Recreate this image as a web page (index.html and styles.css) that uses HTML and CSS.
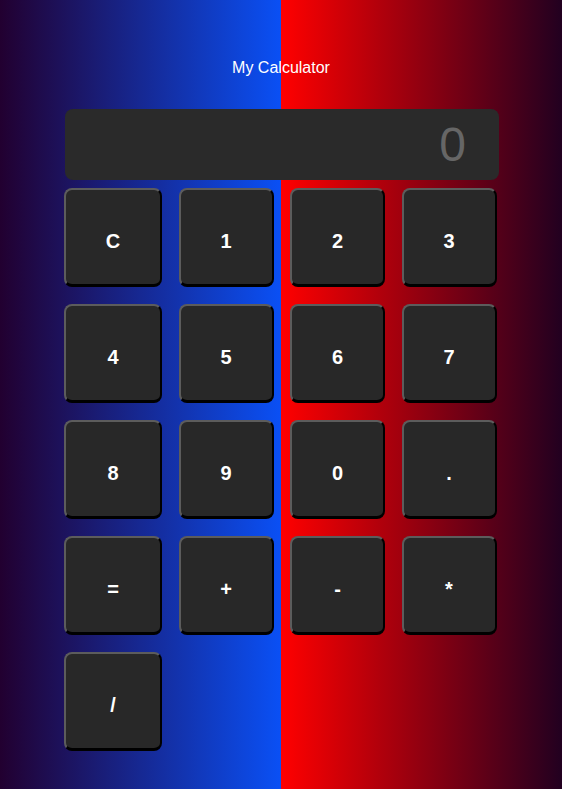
FILE: index.html
```html
<!DOCTYPE html>
<html lang="en">
<head>
<meta charset="utf-8">
<title>My Calculator</title>
<link rel="stylesheet" href="styles.css">
</head>
<body>
<main class="calc">
  <h1 class="title">My Calculator</h1>
  <div class="display">0</div>
  <div class="keys">
    <button class="key">C</button>
    <button class="key">1</button>
    <button class="key">2</button>
    <button class="key">3</button>
    <button class="key">4</button>
    <button class="key">5</button>
    <button class="key">6</button>
    <button class="key">7</button>
    <button class="key">8</button>
    <button class="key">9</button>
    <button class="key">0</button>
    <button class="key">.</button>
    <button class="key">=</button>
    <button class="key">+</button>
    <button class="key">-</button>
    <button class="key">*</button>
    <button class="key">/</button>
  </div>
</main>
</body>
</html>
```
FILE: styles.css
```css
html, body {
  margin: 0;
  padding: 0;
}
body {
  min-height: 100vh;
  font-family: "Liberation Sans", Arial, sans-serif;
  background: linear-gradient(to right, #220030 0%, #0a50f5 50%, #ff0000 50%, #220020 100%);
}
.calc {
  width: 434px;
  margin: 0 auto;
  padding-top: 59px;
}
.title {
  margin: 0;
  font-size: 16px;
  line-height: 18px;
  font-weight: normal;
  color: #ffffff;
  text-align: center;
}
.display {
  margin-top: 32px;
  margin-left: 1px;
  width: 434px;
  height: 71px;
  box-sizing: border-box;
  border-radius: 8px;
  background: #2a2a2a;
  color: #666666;
  font-size: 48px;
  display: flex;
  align-items: center;
  justify-content: flex-end;
  padding-right: 33px;
}
.keys {
  margin-top: 8px;
  display: grid;
  grid-template-columns: 98px 95px 95px 95px;
  grid-auto-rows: 99px;
  column-gap: 16px;
  column-gap: 16.5px;
  row-gap: 17px;
}
.key {
  box-sizing: border-box;
  margin: 0;
  padding: 8px 0 0 0;
  background: #282828;
  color: #ffffff;
  font-family: "Liberation Sans", Arial, sans-serif;
  font-size: 20px;
  font-weight: bold;
  border-radius: 8px;
  border-style: solid;
  border-width: 2px 2px 3px 2px;
  border-color: #5c5c5c #000000 #000000 #5c5c5c;
}
```
